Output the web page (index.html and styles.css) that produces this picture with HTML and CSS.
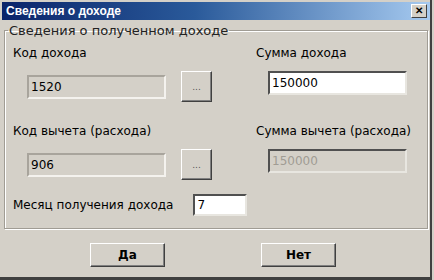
FILE: index.html
```html
<!DOCTYPE html>
<html lang="ru">
<head>
  <meta charset="UTF-8" />
  <title>Сведения о доходе</title>
  <link rel="stylesheet" href="styles.css">
</head>
<body>
  <div class="dialog">
    <div class="titlebar">
      <span class="title">Сведения о доходе</span>
      <button class="close-btn">&#x2715;</button>
    </div>
    <div class="dialog-body">
      <fieldset class="group">
        <legend>Сведения о полученном доходе</legend>
        <div class="fields">
          <div class="field">
            <label>Код дохода</label>
            <div class="field-row">
              <input class="edit disabled" type="text" value="1520" disabled>
              <button class="btn dots">...</button>
            </div>
          </div>
          <div class="field right">
            <label>Сумма дохода</label>
            <div class="field-row">
              <input class="edit" type="text" value="150000">
            </div>
          </div>
          <div class="field">
            <label>Код вычета (расхода)</label>
            <div class="field-row">
              <input class="edit disabled" type="text" value="906" disabled>
              <button class="btn dots">...</button>
            </div>
          </div>
          <div class="field right">
            <label>Сумма вычета (расхода)</label>
            <div class="field-row">
              <input class="edit disabled grey-text" type="text" value="150000" disabled>
            </div>
          </div>
        </div>
        <div class="month-row">
          <label>Месяц получения дохода</label>
          <input class="edit month" type="text" value="7">
        </div>
      </fieldset>
      <div class="buttons">
        <button class="btn action">Да</button>
        <button class="btn action">Нет</button>
      </div>
    </div>
  </div>
</body>
</html>
```

FILE: styles.css
```css
body {
  margin: 0;
  background: #d4d0c8;
  height: 280px;
  overflow: hidden;
  font-family: "DejaVu Sans", Verdana, sans-serif;
  font-size: 12px;
  color: #000;
}
.dialog {
  width: 432px;
  height: 280px;
  background: #d4d0c8;
  border-right: 2px solid #404040;
  border-bottom: 3px solid #404040;
  box-sizing: border-box;
  display: flex;
  flex-direction: column;
}
.titlebar {
  margin: 2px 0 0 2px;
  height: 18px;
  background: linear-gradient(to right, #0a246a, #2a5a9a 45%, #a6caf0);
  display: flex;
  align-items: center;
  justify-content: space-between;
  padding: 0 3px 0 4px;
}
.title {
  color: #fff;
  font-family: "Liberation Sans", Arial, sans-serif;
  font-weight: bold;
  font-size: 12px;
}
.close-btn {
  width: 16px;
  height: 14px;
  padding: 0;
  background: #d4d0c8;
  border: 1px solid;
  border-color: #fff #404040 #404040 #fff;
  font-size: 10px;
  font-weight: bold;
  line-height: 12px;
  color: #000;
}
.dialog-body {
  flex: 1;
  padding: 0 2px 0 4px;
  display: flex;
  flex-direction: column;
}
.group {
  margin: 3px 0 0;
  padding: 8px 8px 13px 8px;
  border: 1px solid #a09c94;
  box-shadow: inset 1px 1px 0 #fff, 1px 1px 0 #fff;
  height: 206px;
  box-sizing: border-box;
}
.group legend {
  padding: 0 1px;
  margin-left: -5px;
  font-size: 13px;
  color: #222;
}
.fields {
  display: grid;
  grid-template-columns: 243px 1fr;
  row-gap: 22px;
}
.field label {
  display: block;
  height: 25px;
  white-space: nowrap;
}
.field-row {
  display: flex;
  align-items: center;
  gap: 15px;
  padding-left: 14px;
}
.field.right .field-row {
  padding-left: 12px;
}
.edit {
  width: 139px;
  height: 24px;
  box-sizing: border-box;
  border: 2px solid;
  border-color: #505050 #e8e6e0 #e8e6e0 #505050;
  background: #fff;
  font-family: "DejaVu Sans", Verdana, sans-serif;
  font-size: 12px;
  padding: 0 2px;
  color: #000;
}
.edit.disabled {
  background: #d4d0c8;
  border-color: #a8a49c #f4f2ee #f4f2ee #a8a49c;
}
.edit.grey-text {
  color: #a09c94;
  border-color: #505050 #e8e6e0 #e8e6e0 #505050;
}
.btn {
  background: #d4d0c8;
  border: 1px solid;
  border-color: #fff #404040 #404040 #fff;
  box-shadow: inset -1px -1px 0 #808080;
  font-family: "DejaVu Sans", Verdana, sans-serif;
  color: #000;
  padding: 0;
}
.dots {
  width: 31px;
  height: 31px;
  font-size: 9px;
  color: #555;
}
.month-row {
  display: flex;
  align-items: center;
  gap: 20px;
  margin-top: 14px;
}
.edit.month {
  width: 54px;
  height: 22px;
}
.buttons {
  display: flex;
  justify-content: center;
  gap: 96px;
  margin-top: 14px;
  padding-right: 6px;
}
.action {
  width: 75px;
  height: 24px;
  font-size: 12px;
  font-weight: bold;
}
```
